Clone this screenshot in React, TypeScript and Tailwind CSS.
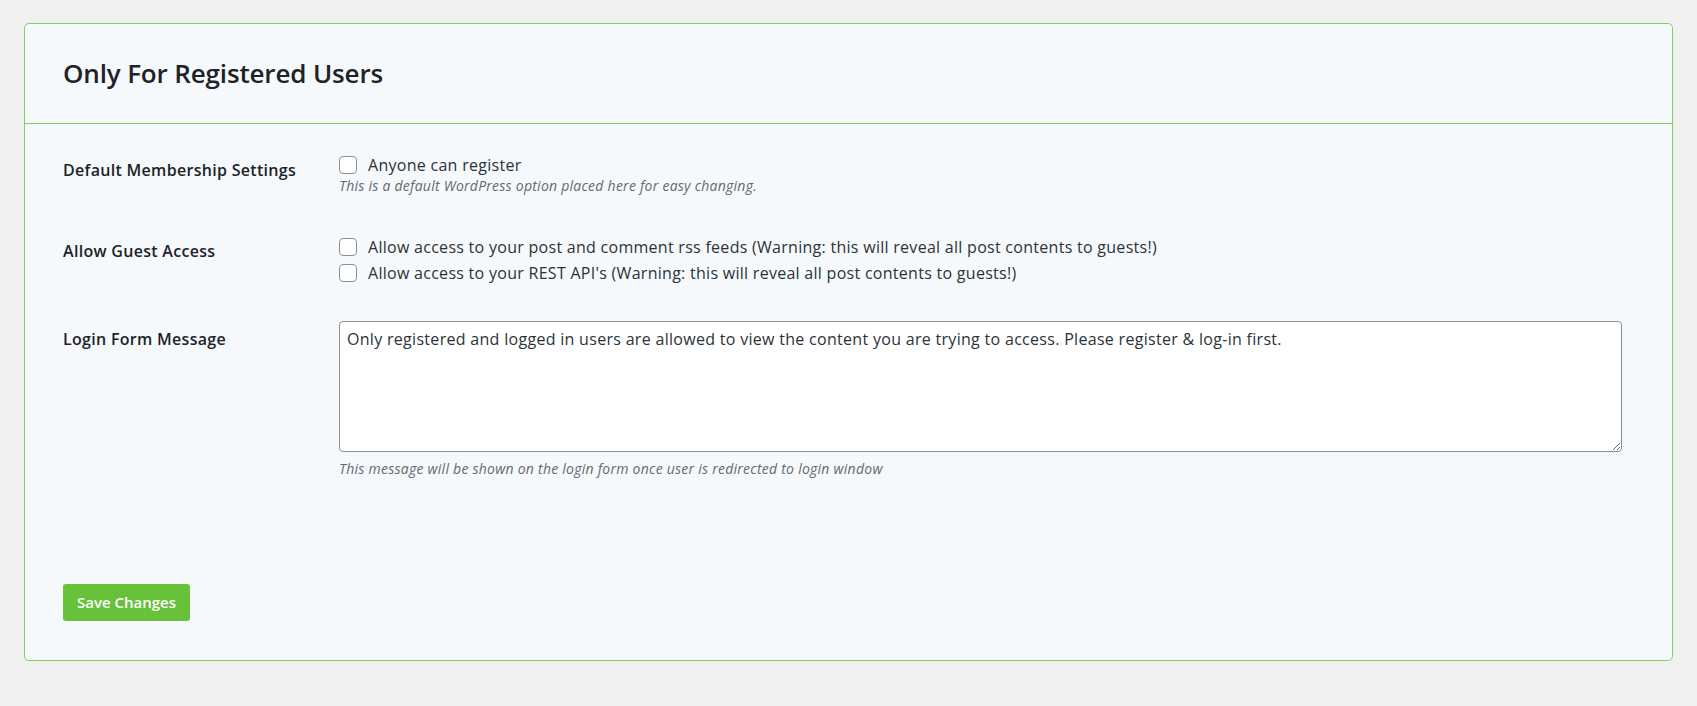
import React, { useState } from 'react'

const font = { fontFamily: '"Open Sans", "Noto Sans", sans-serif' }

const Checkbox = ({ label }: { label: string }) => {
  const [checked, setChecked] = useState(false)
  return (
    <label className="flex items-center h-[26px] cursor-pointer">
      <input
        type="checkbox"
        checked={checked}
        onChange={() => setChecked(!checked)}
        className="appearance-none w-[18px] h-[18px] mr-[11px] rounded-[4px] border border-[#8c8f94] bg-white shrink-0"
      />
      <span className="text-[16px] tracking-[0.28px] text-[#2c3338]">{label}</span>
    </label>
  )
}

const App = () => {
  return (
    <div className="min-h-screen bg-[#f0f0f1] pt-[23px] px-[24px]" style={font}>
      <div className="bg-[#f5f9fc] border border-[#7fd25e] rounded-[5px]">
        {/* Header */}
        <div className="h-[100px] flex items-center pl-[38px] border-b border-[#7fd25e]">
          <h1 className="text-[26px] font-semibold text-[#1d2327] tracking-[-0.15px]">Only For Registered Users</h1>
        </div>

        {/* Settings */}
        <div className="pl-[38px] pr-[50px] pt-[28px] pb-[39px]">
          <div className="flex">
            <div className="w-[276px] pt-[6px] text-[16px] leading-[24px] tracking-[0.3px] font-semibold text-[#1d2327]">Default Membership Settings</div>
            <div className="flex flex-col">
              <Checkbox label="Anyone can register" />
              <p className="text-[14px] leading-[18px] tracking-[0.25px] italic text-[#646970] -mt-[1px]">This is a default WordPress option placed here for easy changing.</p>
            </div>
          </div>

          <div className="flex mt-[39px]">
            <div className="w-[276px] pt-[5px] text-[16px] leading-[24px] tracking-[0.3px] font-semibold text-[#1d2327]">Allow Guest Access</div>
            <div className="flex flex-col">
              <Checkbox label="Allow access to your post and comment rss feeds (Warning: this will reveal all post contents to guests!)" />
              <Checkbox label="Allow access to your REST API's (Warning: this will reveal all post contents to guests!)" />
            </div>
          </div>

          <div className="flex mt-[35px]">
            <div className="w-[276px] pt-[6px] text-[16px] leading-[24px] tracking-[0.3px] font-semibold text-[#1d2327]">Login Form Message</div>
            <div className="flex-1 flex flex-col">
              <textarea
                className="w-full h-[131px] border border-[#8c8f94] rounded-[4px] bg-white px-[7px] pt-[5px] text-[16px] tracking-[0.3px] text-[#2c3338] leading-[24px] resize-y"
                defaultValue="Only registered and logged in users are allowed to view the content you are trying to access. Please register & log-in first."
              />
              <p className="text-[14px] leading-[18px] tracking-[0.25px] italic text-[#646970] mt-[8px]">This message will be shown on the login form once user is redirected to login window</p>
            </div>
          </div>

          <button className="mt-[106px] h-[37px] px-[14px] rounded-[3px] bg-[#67c23a] text-white text-[15px] font-semibold">
            Save Changes
          </button>
        </div>
      </div>
    </div>
  )
}

export default App
